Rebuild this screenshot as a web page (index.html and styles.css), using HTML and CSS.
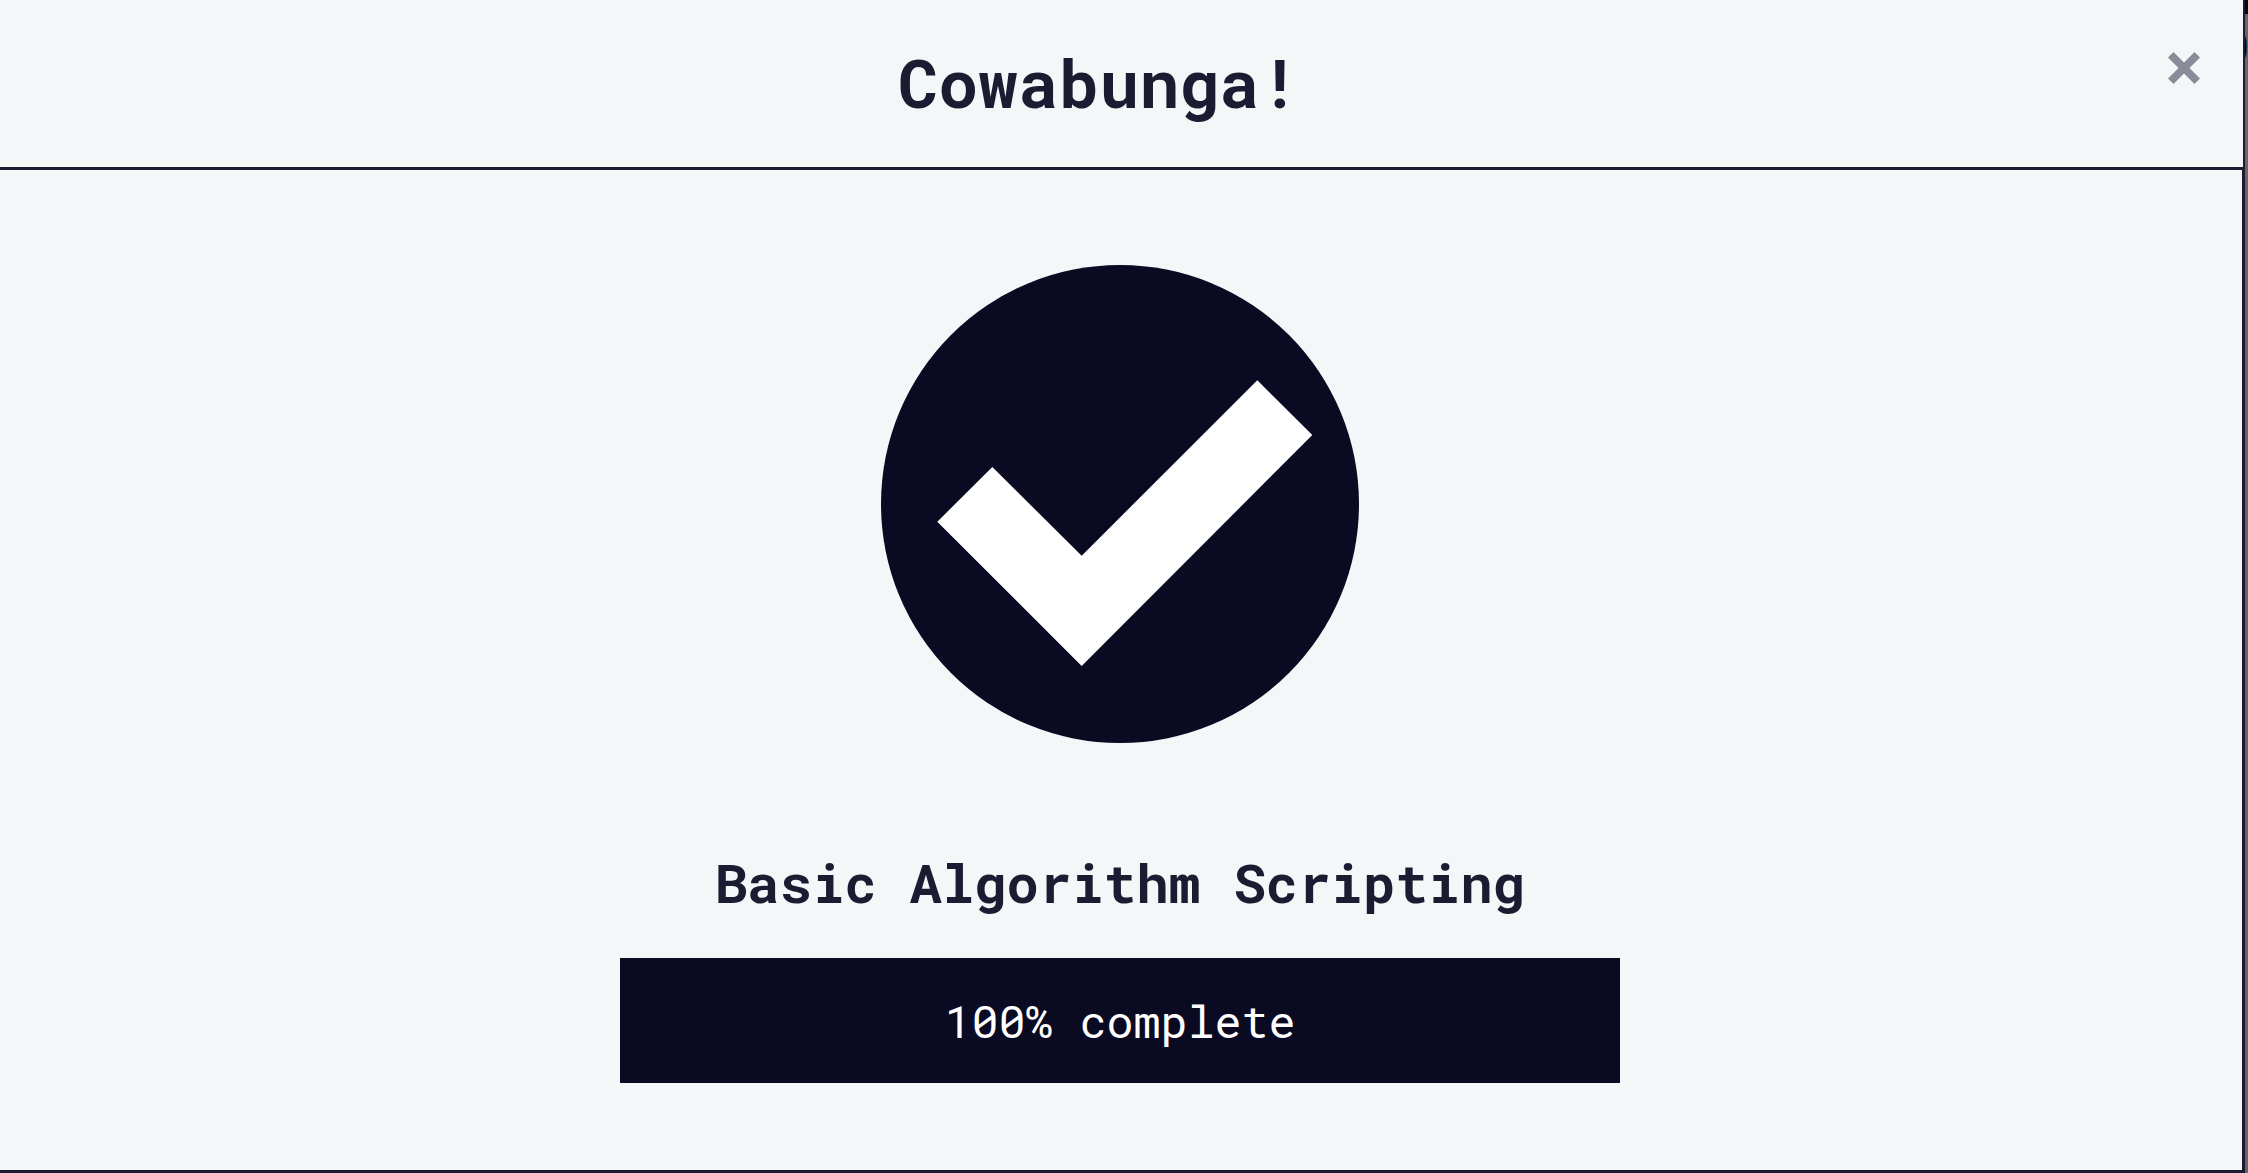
FILE: index.html
```html
<!DOCTYPE html>
<html lang="en">
<head>
<meta charset="utf-8">
<meta name="viewport" content="width=device-width, initial-scale=1">
<title>Basic Algorithm Scripting</title>
<link rel="stylesheet" href="styles.css">
</head>
<body class="page">
<main class="dialog" role="dialog" aria-labelledby="dialog-title">
  <header class="dialog-header">
    <h1 class="dialog-title" id="dialog-title">Cowabunga!</h1>
    <button class="close" type="button" aria-label="Close">
      <svg class="close-icon" viewBox="0 0 32 32" aria-hidden="true"><path d="M5.5 0 16 10.5 26.500 0 32 5.500 21.500 16 32 26.500 26.500 32 16 21.500 5.500 32 0 26.500 10.500 16 0 5.500z" fill="currentColor"/></svg>
    </button>
  </header>
  <section class="dialog-body">
    <svg class="check" viewBox="0 0 478 478" role="img" aria-label="Passed">
      <circle cx="239" cy="239" r="239" fill="#0a0a23"/>
      <path d="M111.300 202 200.700 290.700 376.300 115.300 431.300 170 200.700 401 56.300 256.700z" fill="#fff"/>
    </svg>
    <h2 class="block-title">Basic Algorithm Scripting</h2>
    <div class="progress" role="progressbar" aria-valuenow="100" aria-valuemin="0" aria-valuemax="100" aria-label="Progress">
      <div class="progress-fill" style="width: 100%">100% complete</div>
    </div>
  </section>
</main>
<div class="backdrop">
  <div class="backdrop-nav"></div>
  <div class="backdrop-dot"></div>
</div>
</body>
</html>
```

FILE: styles.css
```css
* {
  box-sizing: border-box;
}

.page {
  margin: 0;
  min-height: 100vh;
  display: flex;
  background: #666;
  color: #1b1b32;
  font-family: "Roboto Mono", "DejaVu Sans Mono", monospace;
}

.dialog {
  flex: 1;
  display: flex;
  flex-direction: column;
  background: #f5f6f7;
  border-bottom: 3px solid #1b1b32;
}

.dialog-header {
  display: flex;
  padding-left: 73px;
  height: 170px;
  border-right: 2px solid #1b1b32;
  border-bottom: 3px solid #1b1b32;
}

.dialog-title {
  flex: 1;
  margin: 0;
  font-size: 67px;
  line-height: 164px;
  font-weight: 700;
  text-align: center;
}

.close {
  width: 118px;
  height: 135px;
  padding: 0;
  display: flex;
  align-items: center;
  justify-content: center;
  border: 0;
  background: none;
  color: #8a8a98;
  cursor: pointer;
}

.close-icon {
  width: 32px;
  height: 32px;
}

.dialog-body {
  flex: 1;
  display: flex;
  flex-direction: column;
  align-items: center;
  padding: 95px 26px 87px 24px;
  border-right: 3px solid #1b1b32;
}

.check {
  width: 478px;
  max-width: 100%;
  height: 478px;
}

.block-title {
  margin: 99px 0 36px;
  font-size: 54px;
  line-height: 80px;
  font-weight: 700;
  text-align: center;
}

.progress {
  width: 100%;
  max-width: 1000px;
  background: #d0d0d5;
}

.progress-fill {
  background: #0a0a23;
  color: #fff;
  font-size: 45px;
  line-height: 125px;
  text-align: center;
  white-space: nowrap;
}

.backdrop {
  width: 3px;
  overflow: hidden;
}

.backdrop-nav {
  height: 14px;
  margin-bottom: 22px;
  background: #04040e;
}

.backdrop-dot {
  width: 4px;
  height: 22px;
  margin-left: -2px;
  border: 1px solid #123a50;
  border-radius: 50%;
  background: #04040e;
}
```
